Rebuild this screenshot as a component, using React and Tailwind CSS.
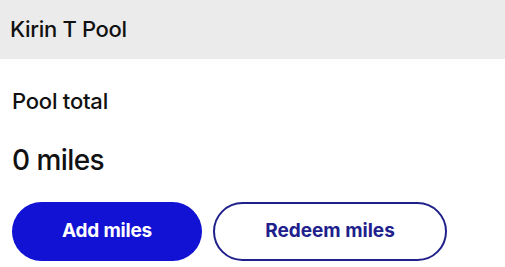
export default function App() {
    return (
        <div className="w-[505px] h-[267px] bg-white text-[#111] overflow-hidden" style={{ fontFamily: 'Inter, "Noto Sans", sans-serif' }}>
            <div className="h-[59px] bg-[#ebebeb] flex items-center px-[10px]">
                <h2 className="text-[22px] font-medium tracking-[-0.015em]">Kirin T Pool</h2>
            </div>
            <div className="px-[12px]">
                <p className="mt-[27px] text-[22px] leading-[30px] font-medium tracking-[-0.01em]">Pool total</p>
                <p className="mt-[26px] text-[28px] leading-[36px] font-medium tracking-[-0.02em]">0 miles</p>
                <div className="mt-[24px] flex gap-[11px]">
                    <button type="button" className="w-[190px] h-[59px] rounded-full bg-[#1212d4] text-white text-[19px] font-bold tracking-[-0.01em]">
                        Add miles
                    </button>
                    <button type="button" className="w-[234px] h-[59px] rounded-full border-2 border-[#20208c] text-[#20208c] text-[19px] font-bold">
                        Redeem miles
                    </button>
                </div>
            </div>
        </div>
    );
}
